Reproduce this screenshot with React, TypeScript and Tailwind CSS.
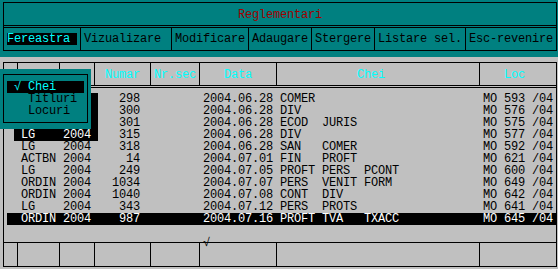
import React from 'react'

interface Row {
  tip: string
  an: string
  numar: string
  data: string
  chei: string
  loc: string
  marked?: boolean
  selected?: boolean
}

// the first three rows sit under the drop-down, so their tip/an are not shown
const rows: Row[] = [
  { tip: '', an: '    ', numar: '298', data: '2004.06.28', chei: 'COMER', loc: 'MO 593 /04', marked: true },
  { tip: '', an: '    ', numar: '300', data: '2004.06.28', chei: 'DIV', loc: 'MO 576 /04', marked: true },
  { tip: '', an: '    ', numar: '301', data: '2004.06.28', chei: 'ECOD  JURIS', loc: 'MO 575 /04', marked: true },
  { tip: 'LG', an: '2004', numar: '315', data: '2004.06.28', chei: 'DIV', loc: 'MO 577 /04', marked: true },
  { tip: 'LG', an: '2004', numar: '318', data: '2004.06.28', chei: 'SAN   COMER', loc: 'MO 592 /04' },
  { tip: 'ACTBN', an: '2004', numar: '14', data: '2004.07.01', chei: 'FIN   PROFT', loc: 'MO 621 /04' },
  { tip: 'LG', an: '2004', numar: '249', data: '2004.07.05', chei: 'PROFT PERS  PCONT', loc: 'MO 600 /04' },
  { tip: 'ORDIN', an: '2004', numar: '1034', data: '2004.07.07', chei: 'PERS  VENIT FORM', loc: 'MO 649 /04' },
  { tip: 'ORDIN', an: '2004', numar: '1040', data: '2004.07.08', chei: 'CONT  DIV', loc: 'MO 642 /04' },
  { tip: 'LG', an: '2004', numar: '343', data: '2004.07.12', chei: 'PERS  PROTS', loc: 'MO 641 /04' },
  { tip: 'ORDIN', an: '2004', numar: '987', data: '2004.07.16', chei: 'PROFT TVA   TXACC', loc: 'MO 645 /04', selected: true },
]

const menu = [
  { label: 'Vizualizare', w: 'w-[91px]' },
  { label: 'Modificare', w: 'w-[77px]' },
  { label: 'Adaugare', w: 'w-[63px]' },
  { label: 'Stergere', w: 'w-[63px]' },
  { label: 'Listare sel.', w: 'w-[91px]' },
  { label: 'Esc-revenire', w: 'w-[91px]' },
]

// column cells of the table frame (header and footer share them)
const cols = [
  { w: 'w-[13px]', label: '', pl: '' },
  { w: 'w-[42px]', label: '', pl: '' },
  { w: 'w-[35px]', label: '', pl: '' },
  { w: 'w-[56px]', label: 'Numar', pl: 'pl-[10px]' },
  { w: 'w-[49px]', label: 'Nr.sec', pl: 'pl-[3px]' },
  { w: 'w-[77px]', label: 'Data', pl: 'pl-[24px]' },
  { w: 'w-[203px]', label: 'Chei', pl: 'pl-[80px]' },
  { w: 'w-[77px]', label: 'Loc', pl: 'pl-[24px]' },
]

function rowTail(r: Row) {
  return r.numar.padStart(6) + ' '.repeat(9) + r.data + ' ' + r.chei.padEnd(28) + ' ' + r.loc
}

export default function App() {
  return (
    <div className="relative w-[558px] h-[269px] overflow-hidden bg-[#c0c0c0] text-black font-['Liberation_Mono','DejaVu_Sans_Mono',monospace] text-[12px] leading-[12px] tracking-[-0.2px]">
      {/* top bar */}
      <div className="h-[57px] bg-[#008080] pt-[2px] pl-[3px]">
        <div className="w-[554px] h-[49px] border border-black flex flex-col">
          <div className="h-[25px] border-b-[3px] border-double border-black pt-[6px] pl-[234px] text-[#a00000] whitespace-pre">
            Reglementari
          </div>
          <div className="flex h-[22px]">
            <div className="w-[76px] pt-[5px] pl-[3px]">
              <div className="w-[70px] h-[12px] bg-black text-[#00ffff] whitespace-pre">Fereastra</div>
            </div>
            {menu.map((m) => (
              <div key={m.label} className={`${m.w} h-full border-l border-black pt-[5px] pl-[3px] whitespace-pre`}>
                {m.label}
              </div>
            ))}
          </div>
        </div>
      </div>

      {/* table */}
      <div className="pt-[5px] pl-[3px]">
        <div className="w-[554px] h-[205px] border border-black flex flex-col">
          <div className="h-[25px] border-b-[3px] border-double border-black flex">
            {cols.map((c, i) => (
              <div
                key={i}
                className={`${c.w} h-full ${i > 0 ? 'border-l border-black' : ''} ${c.pl} pt-[6px] text-[#00ffff] whitespace-pre`}
              >
                {c.label}
              </div>
            ))}
          </div>

          <div className="h-[154px] pt-[5px]">
            {rows.map((r, i) =>
              r.selected ? (
                <div key={i} className="ml-[3px] pl-[7px] h-[12px] bg-black text-white whitespace-pre">
                  {' ' + r.tip.padEnd(6) + r.an + ' ' + rowTail(r)}
                </div>
              ) : (
                <div key={i} className="pl-[10px] h-[12px] whitespace-pre flex">
                  <span className={r.marked ? 'bg-black text-white' : ''}>{' ' + r.tip.padEnd(6) + r.an + ' '}</span>
                  <span>{rowTail(r)}</span>
                </div>
              )
            )}
          </div>

          <div className="h-[24px] border-t border-black flex">
            {cols.map((c, i) => (
              <div key={i} className={`${c.w} h-full ${i > 0 ? 'border-l border-black' : ''}`} />
            ))}
          </div>
        </div>
      </div>

      {/* checkmark sitting on the footer line */}
      <span className="absolute left-[203px] top-[237px] whitespace-pre">√</span>

      {/* Fereastra drop-down */}
      <div className="absolute left-0 top-[69px] w-[91px] h-[60px] bg-[#008080] pt-[5px] pl-[3px]">
        <div className="w-[85px] h-[49px] border border-black pt-[6px]">
          <div className="ml-[3px] w-[77px] h-[12px] pl-[7px] bg-black text-[#00ffff] whitespace-pre">√ Chei</div>
          <div className="ml-[3px] h-[12px] pl-[7px] whitespace-pre">{'  Titluri'}</div>
          <div className="ml-[3px] h-[12px] pl-[7px] whitespace-pre">{'  Locuri'}</div>
        </div>
      </div>
    </div>
  )
}
